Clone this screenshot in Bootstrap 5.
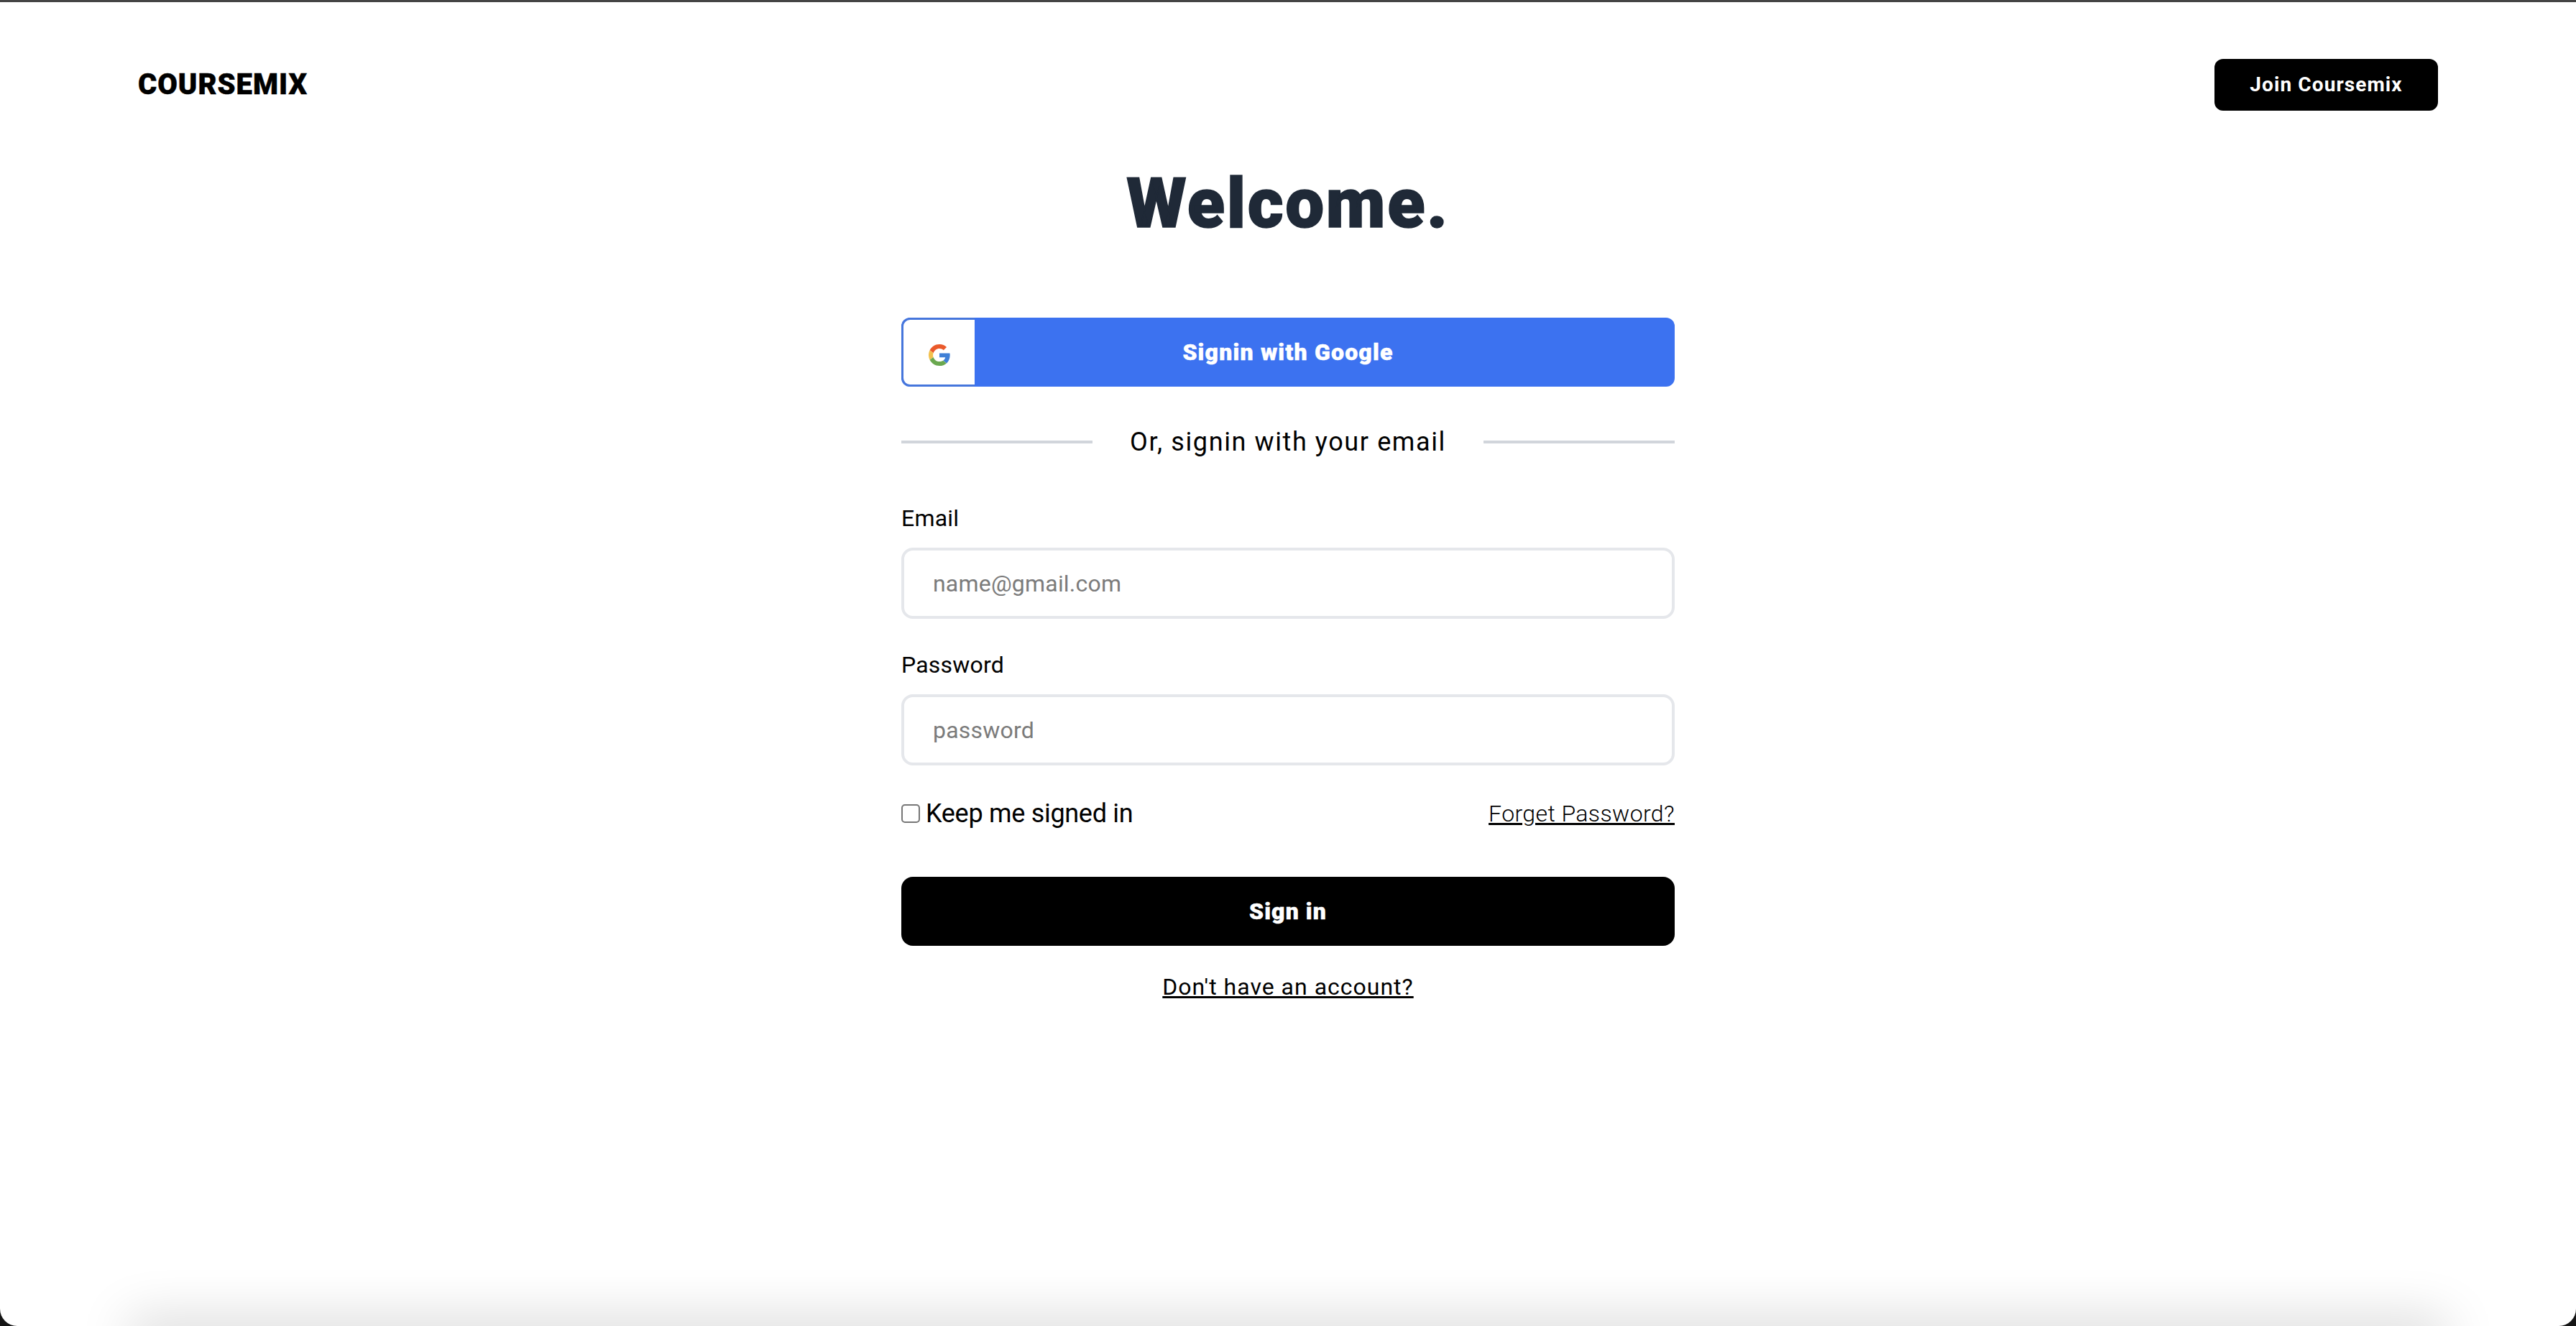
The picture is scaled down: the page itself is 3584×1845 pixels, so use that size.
<!DOCTYPE html>
<html lang="en">
<head>
  <meta charset="UTF-8" />
  <meta name="viewport" content="width=device-width, initial-scale=1.0"/>
  <title>Coursemix - Sign in</title>
  <link href="https://cdn.jsdelivr.net/npm/bootstrap@5.3.3/dist/css/bootstrap.min.css" rel="stylesheet"/>
  <style>
    html, body { height: 100%; }
    body { background: #151515; font-family: Roboto, "Liberation Sans", sans-serif; color: #000; overflow: hidden; }
    .app-window { height: 1845px; background: #fff; border-top: 3px solid #444; border-radius: 0 0 24px 24px; position: relative; overflow: hidden; }
    .app-window::after { content: ""; position: absolute; left: 190px; right: 190px; bottom: -30px; height: 30px; box-shadow: 0 0 70px 10px rgba(0,0,0,.17); }
    .top-bar { padding: 79px 192px 0; }
    .brand { font-size: 40px; font-weight: 900; letter-spacing: 1px; -webkit-text-stroke: .5px #000; line-height: 72px; color: #000; text-decoration: none; }
    .join-btn { width: 311px; height: 72px; border-radius: 12px; font-size: 28px; font-weight: 700; letter-spacing: 1.1px; line-height: 72px; padding: 0; background: #000; color: #fff; border: 0; }
    .welcome { font-size: 96px; font-weight: 900; letter-spacing: 2.6px; -webkit-text-stroke: 1.5px #1f2937; line-height: 96px; color: #1f2937; margin: 81px 0 0; }
    .form-box { width: 1076px; margin: 111px auto 0; }
    .google-btn { height: 96px; width: 100%; background: #3c72f0; border: 0; border-radius: 12px; padding: 0; color: #fff; font-size: 32px; font-weight: 900; letter-spacing: 1.2px; -webkit-text-stroke: .5px #fff; display: flex; overflow: hidden; }
    .google-mark { width: 102px; height: 96px; flex: none; background: #fff; border: 3px solid #4676dc; border-right: 0; border-radius: 12px 0 0 12px; display: flex; align-items: center; justify-content: center; padding-top: 8px; }
    .google-text { flex: 1; line-height: 96px; text-align: center; padding-right: 102px; }
    .or-row { margin: 53px 0 58px; height: 48px; font-size: 36px; letter-spacing: 1.6px; }
    .or-line { flex: 1; height: 4px; background: #d1d5db; }
    .or-text { padding: 0 52px; line-height: 48px; }
    .field-label { font-size: 32px; letter-spacing: .2px; line-height: 48px; margin-bottom: 17px; display: block; }
    .field-input { height: 99px; border: 4px solid #e5e7eb; border-radius: 16px; font-size: 32px; letter-spacing: .2px; padding: 0 40px; color: #000; }
    .field-input::placeholder { color: #7b7b7b; }
    .field-wrap { margin-bottom: 40px; }
    .options-row { font-size: 32px; line-height: 48px; margin-top: 43px; }
    .keep-label { font-size: 36px; letter-spacing: -.3px; }
    .keep-label input { appearance: none; width: 26px; height: 26px; margin: 0 8px 0 0; border: 2px solid #767676; border-radius: 5px; background: #fff; }
    .forget-link { font-weight: 300; letter-spacing: .4px; color: #000; }
    .signin-btn { display: block; width: 100%; height: 96px; border: 0; border-radius: 16px; background: #000; color: #fff; font-size: 32px; font-weight: 900; letter-spacing: 1.1px; -webkit-text-stroke: .5px #fff; margin-top: 64px; }
    .account-link { display: block; text-align: center; font-size: 32px; letter-spacing: 1px; line-height: 48px; color: #000; margin-top: 33px; }
  </style>
</head>
<body>
  <div class="app-window">
    <div class="top-bar d-flex justify-content-between align-items-center">
      <a href="#" class="brand">COURSEMIX</a>
      <button type="button" class="btn join-btn">Join Coursemix</button>
    </div>

    <h1 class="welcome text-center">Welcome.</h1>

    <form class="form-box">
      <button type="button" class="google-btn">
        <span class="google-mark">
          <svg width="30" height="30" viewBox="0 0 48 48">
            <path fill="#ea5a2b" d="M24 9.5c3.5 0 6.700 1.200 9.200 3.600l6.900-6.900C35.900 2.400 30.500 0 24 0 14.600 0 6.500 5.400 2.600 13.200l8 6.200C12.500 13.700 17.800 9.500 24 9.500z"/>
            <path fill="#3f7fd6" d="M47.500 24.500c0-1.600-.1-3.100-.4-4.500H24v9h13.200c-.6 3-2.300 5.500-4.800 7.200l7.700 6c4.500-4.200 7.400-10.300 7.400-17.700z"/>
            <path fill="#f2c14e" d="M10.500 28.600c-.5-1.400-.8-3-.8-4.600s.3-3.200.8-4.600l-8-6.200C.9 16.500 0 20.100 0 24s.9 7.500 2.600 10.800l7.900-6.200z"/>
            <path fill="#6aa84f" d="M24 48c6.500 0 11.900-2.100 15.900-5.800l-7.700-6c-2.200 1.500-4.900 2.300-8.200 2.300-6.200 0-11.500-4.200-13.400-9.900l-8 6.200C6.500 42.600 14.600 48 24 48z"/>
          </svg>
        </span>
        <span class="google-text">Signin with Google</span>
      </button>

      <div class="or-row d-flex align-items-center">
        <div class="or-line"></div>
        <div class="or-text">Or, signin with your email</div>
        <div class="or-line"></div>
      </div>

      <div class="field-wrap">
        <label class="field-label" for="email">Email</label>
        <input type="email" id="email" class="form-control field-input" placeholder="name@gmail.com" />
      </div>
      <div>
        <label class="field-label" for="password">Password</label>
        <input type="password" id="password" class="form-control field-input" placeholder="password" />
      </div>

      <div class="options-row d-flex justify-content-between align-items-center">
        <label class="keep-label d-flex align-items-center" for="keep"><input type="checkbox" id="keep" />Keep me signed in</label>
        <a href="#" class="forget-link">Forget Password?</a>
      </div>

      <button type="submit" class="signin-btn">Sign in</button>
      <a href="#" class="account-link">Don't have an account?</a>
    </form>
  </div>
</body>
</html>
